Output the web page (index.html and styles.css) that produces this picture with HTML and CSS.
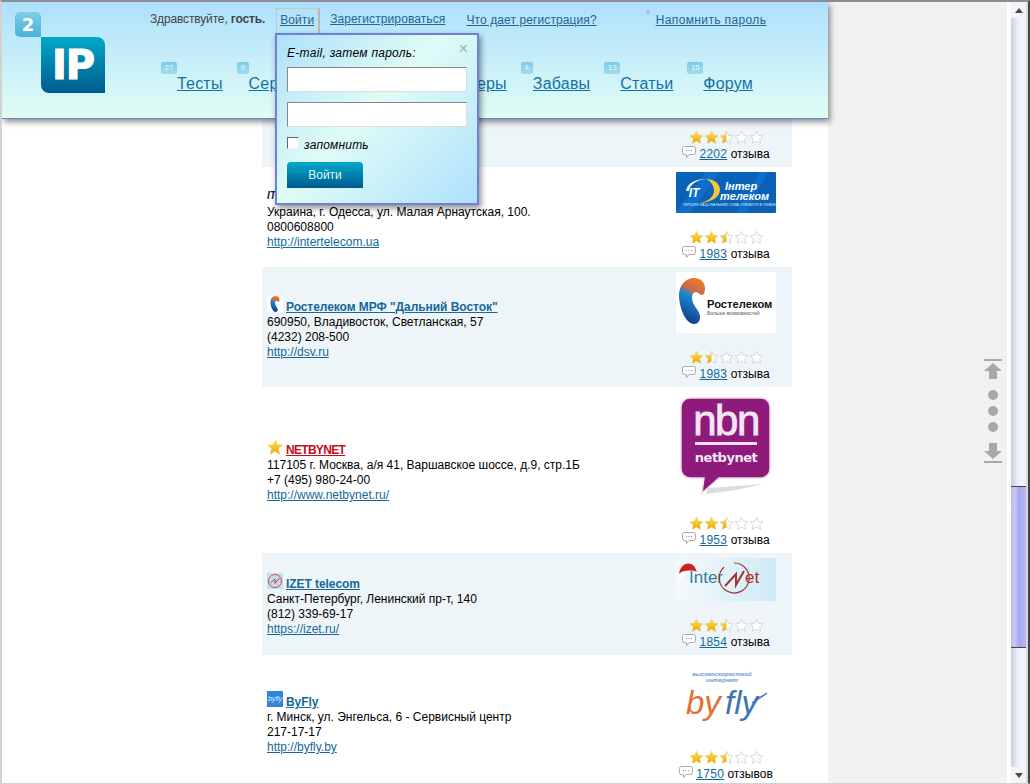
FILE: index.html
```html
<!DOCTYPE html>
<html lang="ru">
<head>
    <meta charset="UTF-8">
    <title>2IP - Провайдеры</title>
    <link rel="stylesheet" href="styles.css">
</head>
<body>
    <svg class="defs" aria-hidden="true">
        <defs>
            <linearGradient id="gold" x1="0" y1="0" x2="0" y2="1">
                <stop offset="0" stop-color="#ffe45c"/>
                <stop offset="1" stop-color="#eda600"/>
            </linearGradient>
            <linearGradient id="rtk" x1="0.7" y1="0" x2="0.4" y2="1">
                <stop offset="0" stop-color="#f47a20"/>
                <stop offset="0.3" stop-color="#c86a50"/>
                <stop offset="0.42" stop-color="#1e88d0"/>
                <stop offset="1" stop-color="#123a8c"/>
            </linearGradient>
            <symbol id="star-full" viewBox="0 0 14 14">
                <polygon points="7 .3 9.100 4.700 13.800 5.200 10.400 8.400 11.400 13.200 7 10.800 2.600 13.200 3.600 8.400 .2 5.200 4.900 4.700" fill="url(#gold)" stroke="#eeb100" stroke-width=".4"/>
            </symbol>
            <symbol id="star-half" viewBox="0 0 14 14">
                <polygon points="7 .3 9.100 4.700 13.800 5.200 10.400 8.400 11.400 13.200 7 10.800 2.600 13.200 3.600 8.400 .2 5.200 4.900 4.700" fill="#fff" stroke="#ccc" stroke-width=".8"/>
                <polygon points="7 .3 7 10.800 2.600 13.200 3.600 8.400 .2 5.200 4.900 4.700" fill="url(#gold)"/>
            </symbol>
            <symbol id="star-empty" viewBox="0 0 14 14">
                <polygon points="7 .3 9.100 4.700 13.800 5.200 10.400 8.400 11.400 13.200 7 10.800 2.600 13.200 3.600 8.400 .2 5.200 4.900 4.700" fill="#fff" stroke="#ccc" stroke-width=".8"/>
            </symbol>
            <symbol id="bubble" viewBox="0 0 14 13">
                <path d="M2.500.5h9a2 2 0 0 1 2 2v4a2 2 0 0 1-2 2H7l-2.500 3V8.500h-2a2 2 0 0 1-2-2v-4a2 2 0 0 1 2-2z" fill="#fff" stroke="#aaa"/>
                <path d="M4 4.500h1M6.500 4.500h1M9 4.500h1" stroke="#999"/>
            </symbol>
            <symbol id="rtk-mark" viewBox="0 0 26 46">
                <path d="M15 0C6 0 0 8 0 17c0 13 7 29 15 29 4 0 6-3 6-7 0-7-8-11-8-19 0-4 2-6 4-6s4 3 6 3 3-3 3-7c0-6-5-10-11-10z" fill="url(#rtk)"/>
            </symbol>
        </defs>
    </svg>

    <div class="window">
        <div class="page">
            <main class="content">
                <div class="list">
                    <article class="row tinted">
                        <div class="info"></div>
                        <div class="side-cell">
                            <div class="logo logo-first"></div>
                            <div class="stars">
                                <svg><use href="#star-full"/></svg><svg><use href="#star-full"/></svg><svg><use href="#star-half"/></svg><svg><use href="#star-empty"/></svg><svg><use href="#star-empty"/></svg>
                            </div>
                            <div class="reviews"><svg class="bubble"><use href="#bubble"/></svg><a href="#">2202</a> отзыва</div>
                        </div>
                    </article>

                    <article class="row">
                        <div class="info">
                            <div class="title">
                                <svg class="mini" viewBox="0 0 16 16"><text x="0" y="13" class="mini-it">IT</text></svg>
                                <a href="#">Интертелеком</a>
                            </div>
                            <div>Украина, г. Одесса, ул. Малая Арнаутская, 100.</div>
                            <div>0800608800</div>
                            <a href="#">http://intertelecom.ua</a>
                        </div>
                        <div class="side-cell">
                            <div class="logo">
                                <svg width="100" height="41" viewBox="0 0 100 41">
                                    <rect width="100" height="41" rx="1" fill="#0a62b8"/>
                                    <path d="M0 41 30 0h14L14 41zM60 41 84 0h8L70 41z" fill="#0d6fca"/>
                                    <path d="M10 19C11 11 20 7 30 7c-9 1-16 5-17 12z" fill="#fff"/>
                                    <path d="M30 7c9 0 14 5 14 11 0 7-8 12-20 13 9-2 14-7 14-12 0-5-3-10-8-12z" fill="#f5c53a"/>
                                    <text x="18" y="25" class="it-mark">IT</text>
                                    <text x="49" y="18" class="it-name">Інтер</text>
                                    <text x="44" y="28" class="it-name">телеком</text>
                                    <text x="7" y="34" class="it-sub">ПЕРШИЙ НАЦІОНАЛЬНИЙ CDMA ОПЕРАТОР В УКРАЇНІ</text>
                                </svg>
                            </div>
                            <div class="stars">
                                <svg><use href="#star-full"/></svg><svg><use href="#star-full"/></svg><svg><use href="#star-half"/></svg><svg><use href="#star-empty"/></svg><svg><use href="#star-empty"/></svg>
                            </div>
                            <div class="reviews"><svg class="bubble"><use href="#bubble"/></svg><a href="#">1983</a> отзыва</div>
                        </div>
                    </article>

                    <article class="row tinted">
                        <div class="info">
                            <div class="title">
                                <svg class="mini mini-white" viewBox="0 0 16 16"><use href="#rtk-mark" x="3" y="0" width="10" height="16"/></svg>
                                <a href="#">Ростелеком МРФ "Дальний Восток"</a>
                            </div>
                            <div>690950, Владивосток, Светланская, 57</div>
                            <div>(4232) 208-500</div>
                            <a href="#">http://dsv.ru</a>
                        </div>
                        <div class="side-cell">
                            <div class="logo">
                                <svg width="100" height="61" viewBox="0 0 100 61">
                                    <rect width="100" height="61" fill="#fff"/>
                                    <use href="#rtk-mark" x="3" y="6" width="26" height="46"/>
                                    <text x="31" y="36" class="rt-name">Ростелеком</text>
                                    <text x="31" y="43" class="rt-sub">Больше возможностей</text>
                                </svg>
                            </div>
                            <div class="stars">
                                <svg><use href="#star-full"/></svg><svg><use href="#star-half"/></svg><svg><use href="#star-empty"/></svg><svg><use href="#star-empty"/></svg><svg><use href="#star-empty"/></svg>
                            </div>
                            <div class="reviews"><svg class="bubble"><use href="#bubble"/></svg><a href="#">1983</a> отзыва</div>
                        </div>
                    </article>

                    <article class="row">
                        <div class="info">
                            <div class="title">
                                <svg class="mini" viewBox="0 0 16 16"><polygon points="9 0 10.500 5.500 16 5.800 11.500 9.500 13 15.500 8 12.300 3 15.500 4.500 9.500 0 5.800 5.800 5.500" fill="url(#gold)"/></svg>
                                <a href="#" class="featured">NETBYNET</a>
                            </div>
                            <div>117105 г. Москва, а/я 41, Варшавское шоссе, д.9, стр.1Б</div>
                            <div>+7 (495) 980-24-00</div>
                            <a href="#">http://www.netbynet.ru/</a>
                        </div>
                        <div class="side-cell">
                            <div class="logo logo-tall">
                                <svg width="100" height="107" viewBox="0 0 100 107">
                                    <path d="M32 96 88 92 60 98 30 102z" fill="#ddd"/>
                                    <path d="M14 6h71a9 9 0 0 1 9 9v62a9 9 0 0 1-9 9H43l-17 15 2-15H14a9 9 0 0 1-9-9V15a9 9 0 0 1 9-9z" fill="#8e1a7c" stroke="#f0d8ea" stroke-width="1.500"/>
                                    <text x="50" y="43" class="nbn-big">nbn</text>
                                    <rect x="19" y="50" width="62" height="3" fill="#f3dff0"/>
                                    <text x="50" y="70" class="nbn-small">netbynet</text>
                                </svg>
                            </div>
                            <div class="stars">
                                <svg><use href="#star-full"/></svg><svg><use href="#star-full"/></svg><svg><use href="#star-half"/></svg><svg><use href="#star-empty"/></svg><svg><use href="#star-empty"/></svg>
                            </div>
                            <div class="reviews"><svg class="bubble"><use href="#bubble"/></svg><a href="#">1953</a> отзыва</div>
                        </div>
                    </article>

                    <article class="row tinted">
                        <div class="info">
                            <div class="title">
                                <svg class="mini izet-mini" viewBox="0 0 16 16">
                                    <circle cx="8" cy="8" r="6.500" fill="none" stroke="#d44" stroke-width="1"/>
                                    <path d="M3.500 10 8 6v4.500L12.500 5" fill="none" stroke="#d33"/>
                                </svg>
                                <a href="#">IZET telecom</a>
                            </div>
                            <div>Санкт-Петербург, Ленинский пр-т, 140</div>
                            <div>(812) 339-69-17</div>
                            <a href="#">https://izet.ru/</a>
                        </div>
                        <div class="side-cell">
                            <div class="logo">
                                <svg width="100" height="43" viewBox="0 0 100 43">
                                    <defs>
                                        <linearGradient id="izbg" x1="0" y1="0" x2="1" y2="0">
                                            <stop offset="0" stop-color="#f4fafc"/>
                                            <stop offset="1" stop-color="#cfe9f6"/>
                                        </linearGradient>
                                    </defs>
                                    <rect width="100" height="43" fill="url(#izbg)"/>
                                    <path d="M3 16C4 8 10 4 15 6c3 1 5 4 6 9-5-2-11-2-18 1z" fill="#d01f1f"/>
                                    <path d="M4 15c5-3 12-3 17-1l1 4c-6-2-12-2-17 1z" fill="#fff"/>
                                    <circle cx="4" cy="18" r="2.500" fill="#fff"/>
                                    <text x="13" y="25" class="iz-inter">Inter</text>
                                    <path d="M58 5a15 15 0 1 1-10 4" fill="none" stroke="#a8322f" stroke-width="1.200"/>
                                    <path d="M49 28 60 16v11l8-14" fill="none" stroke="#a8322f" stroke-width="2"/>
                                    <text x="69" y="25" class="iz-et">et</text>
                                </svg>
                            </div>
                            <div class="stars">
                                <svg><use href="#star-full"/></svg><svg><use href="#star-full"/></svg><svg><use href="#star-half"/></svg><svg><use href="#star-empty"/></svg><svg><use href="#star-empty"/></svg>
                            </div>
                            <div class="reviews"><svg class="bubble"><use href="#bubble"/></svg><a href="#">1854</a> отзыва</div>
                        </div>
                    </article>

                    <article class="row last">
                        <div class="info">
                            <div class="title">
                                <svg class="mini byfly-mini" viewBox="0 0 16 16"><text x="8" y="10" class="by-mini">byfly</text></svg>
                                <a href="#">ByFly</a>
                            </div>
                            <div>г. Минск, ул. Энгельса, 6 - Сервисный центр</div>
                            <div>217-17-17</div>
                            <a href="#">http://byfly.by</a>
                        </div>
                        <div class="side-cell">
                            <div class="logo logo-byfly">
                                <svg width="100" height="73" viewBox="0 0 100 73">
                                    <text x="46" y="16" class="by-top">высокоскоростной</text>
                                    <text x="46" y="22" class="by-top">интернет</text>
                                    <text x="10" y="54" class="by-orange">by</text>
                                    <text x="49" y="54" class="by-blue">fly</text>
                                    <path d="M76 43 91 33" stroke="#3e74b4" stroke-width="1.500"/>
                                </svg>
                            </div>
                            <div class="stars">
                                <svg><use href="#star-full"/></svg><svg><use href="#star-full"/></svg><svg><use href="#star-half"/></svg><svg><use href="#star-empty"/></svg><svg><use href="#star-empty"/></svg>
                            </div>
                            <div class="reviews"><svg class="bubble"><use href="#bubble"/></svg><a href="#">1750</a> отзывов</div>
                        </div>
                    </article>
                </div>
            </main>

            <aside class="side">
                <div class="jump">
                    <svg width="18" height="20" viewBox="0 0 18 20"><rect width="18" height="2" fill="#a8a8a8"/><path d="M9 4l9 8h-5v8H5v-8H0z" fill="#a8a8a8"/></svg>
                    <span class="dot"></span>
                    <span class="dot"></span>
                    <span class="dot"></span>
                    <svg width="18" height="20" viewBox="0 0 18 20"><path d="M5 0h8v8h5l-9 8-9-8h5z" fill="#a8a8a8"/><rect y="18" width="18" height="2" fill="#a8a8a8"/></svg>
                </div>
            </aside>
        </div>

        <div class="scrollbar">
            <div class="scroll-btn"><span class="arrow-up"></span></div>
            <div class="track"><div class="thumb"></div></div>
            <div class="scroll-btn"><span class="arrow-down"></span></div>
        </div>

        <header class="header">
            <div class="site-logo">
                <div class="logo-two">2</div>
                <div class="logo-ip">IP</div>
            </div>
            <div class="header-main">
                <div class="top-links">
                    <span class="hello">Здравствуйте, <b>гость.</b></span>
                    <span class="login-tab"><a href="#">Войти</a></span>
                    <a href="#" class="reg">Зарегистрироваться</a>
                    <a href="#" class="why">Что дает регистрация?</a>
                    <span class="asterisk">*</span>
                    <a href="#" class="remind">Напомнить пароль</a>
                </div>
                <nav class="nav">
                    <div class="nav-item"><span class="count">27</span><a href="#">Тесты</a></div>
                    <div class="nav-item"><span class="count one">9</span><a href="#">Сервисы</a></div>
                    <div class="nav-item"><span class="count one">6</span><a href="#">Проверка</a></div>
                    <div class="nav-item"><span class="count one">7</span><a href="#">Хостеры</a></div>
                    <div class="nav-item"><span class="count one">4</span><a href="#">Забавы</a></div>
                    <div class="nav-item"><span class="count">13</span><a href="#">Статьи</a></div>
                    <div class="nav-item"><span class="count">15</span><a href="#">Форум</a></div>
                </nav>
            </div>
        </header>

        <form class="login-box">
            <span class="close">×</span>
            <label class="login-label">E-mail, затем пароль:</label>
            <input type="text" class="field">
            <input type="password" class="field">
            <label class="remember"><input type="checkbox"> запомнить</label>
            <button type="button" class="login-btn">Войти</button>
        </form>
    </div>
</body>
</html>
```

FILE: styles.css
```css
* {
    box-sizing: border-box;
}

html, body {
    margin: 0;
    height: 100%;
    overflow: hidden;
}

body {
    font-family: "Liberation Sans", Arial, sans-serif;
    font-size: 12px;
    line-height: 15px;
    color: #000;
    background: #fff;
}

a {
    color: #15689a;
}

.defs {
    position: absolute;
    width: 0;
    height: 0;
}

.window {
    position: relative;
    display: flex;
    width: 1030px;
    height: 784px;
    border-top: 2px solid #8c8c98;
    border-left: 2px solid #d4d2cc;
    border-right: 2px solid #444;
    border-bottom: 1px solid #d4d2cc;
    overflow: hidden;
}

.page {
    display: flex;
    width: 1009px;
}

/* list */
.content {
    width: 826px;
    background: #fff;
    padding-left: 260px;
}

.list {
    width: 530px;
    margin-top: -2px;
}

.row {
    display: flex;
    align-items: center;
    justify-content: space-between;
    padding: 0 16px 0 5px;
}

.tinted {
    background: #eef5f8;
}

.info {
    padding-top: 2px;
}

.last .info {
    padding-top: 8px;
}

.last .side-cell {
    padding-bottom: 1px;
}

.title {
    display: flex;
    align-items: flex-end;
    font-weight: bold;
    letter-spacing: -.06px;
}

.mini {
    width: 16px;
    height: 16px;
    margin: 0 3px 3px 0;
    flex: none;
}

.mini-white {
    background: #fff;
}

.mini-it {
    font: italic bold 10px "Liberation Sans", sans-serif;
    fill: #123;
}

.izet-mini {
    background: #bfe0f2;
}

.byfly-mini {
    background: #2f86dc;
}

.by-mini {
    font: italic 7px "Liberation Sans", sans-serif;
    fill: #dcecff;
    text-anchor: middle;
}

.title .featured {
    color: #c0101c;
    letter-spacing: -.7px;
}

.side-cell {
    width: 100px;
    padding: 5px 0;
    flex: none;
}

.logo {
    display: flex;
    justify-content: center;
    margin-bottom: 17px;
}

.logo svg {
    display: block;
}

.logo-first {
    height: 108px;
}

.logo-tall {
    height: 107px;
}

.logo-byfly {
    height: 73px;
}

.stars {
    display: flex;
    justify-content: center;
    align-items: center;
    gap: 2px;
    height: 14px;
    margin-bottom: 2px;
}

.stars svg {
    width: 13px;
    height: 13px;
}

.reviews {
    display: flex;
    justify-content: center;
    align-items: flex-start;
    height: 16px;
    line-height: 16px;
    white-space: pre;
    margin: 0 -10px;
}

.reviews a {
    letter-spacing: .3px;
}

.bubble {
    width: 14px;
    height: 13px;
    margin-right: 3px;
}

/* logo texts */
.it-mark {
    font: italic bold 12px "Liberation Sans", sans-serif;
    fill: #fff;
    text-anchor: middle;
}

.it-name {
    font: italic bold 11px "Liberation Sans", sans-serif;
    fill: #fff;
}

.it-sub {
    font: 3.500px "Liberation Sans", sans-serif;
    fill: #d8e8ff;
}

.rt-name {
    font: bold 11.200px "Liberation Sans", sans-serif;
    fill: #111;
}

.rt-sub {
    font: 5px "Liberation Sans", sans-serif;
    fill: #555;
}

.nbn-big {
    font: 42px "Liberation Sans", sans-serif;
    fill: #f6e6f3;
    stroke: #f6e6f3;
    stroke-width: .8px;
    text-anchor: middle;
    letter-spacing: -1.500px;
}

.nbn-small {
    font: bold 13px "DejaVu Sans", sans-serif;
    fill: #f6e6f3;
    text-anchor: middle;
    letter-spacing: -.5px;
}

.iz-inter {
    font: 17px "Liberation Sans", sans-serif;
    fill: #2a7f96;
}

.iz-et {
    font: 17px "Liberation Sans", sans-serif;
    fill: #a8322f;
}

.by-top {
    font: italic bold 6px "Liberation Sans", sans-serif;
    fill: #6a9ad6;
    text-anchor: middle;
}

.by-orange {
    font: italic 33px "Liberation Sans", sans-serif;
    fill: #e2702f;
}

.by-blue {
    font: italic 33px "Liberation Sans", sans-serif;
    fill: #3e74b4;
}

/* gray strip with the jump arrows */
.side {
    display: flex;
    justify-content: flex-end;
    width: 179px;
    padding: 357px 5px 0 0;
    background: #f2f1ef;
    margin-right: 4px;
}

.jump {
    display: flex;
    flex-direction: column;
    align-items: center;
    width: 18px;
}

.jump svg {
    display: block;
    flex: none;
}

.dot {
    width: 10px;
    height: 10px;
    margin-bottom: 6px;
    border-radius: 50%;
    background: #a8a8a8;
}

.jump svg:first-child {
    margin-bottom: 11px;
}

.jump .dot:nth-child(4) {
    margin-bottom: 11px;
}

/* scrollbar */
.scrollbar {
    display: flex;
    flex-direction: column;
    width: 17px;
    border-right: 2px solid #d8d8d8;
}

.scroll-btn {
    display: flex;
    align-items: center;
    justify-content: center;
    height: 16px;
    background: #f4f4f8;
}

.arrow-up, .arrow-down {
    width: 0;
    height: 0;
    border-left: 4px solid transparent;
    border-right: 4px solid transparent;
}

.arrow-up {
    border-bottom: 5px solid #4a4a4a;
}

.arrow-down {
    border-top: 5px solid #4a4a4a;
}

.track {
    flex: 1;
    padding-top: 468px;
    background: linear-gradient(90deg, #ccd0da, #eef1fb 50%, #f4f6fe);
}

.thumb {
    height: 162px;
    border-top: 1px solid #444;
    border-bottom: 1px solid #444;
    background: linear-gradient(90deg, #bcbef0, #c6c8f2 25%, #a4a6f2 55%, #b8baf2);
}

/* header overlay */
.header {
    position: absolute;
    top: 0;
    left: 0;
    display: flex;
    width: 826px;
    height: 117px;
    border-bottom: 1px solid #6f80d6;
    background: linear-gradient(#aee0fd, #e0fdf5);
    box-shadow: 2px 3px 6px rgba(0, 0, 0, .45);
}

.site-logo {
    width: 148px;
    padding: 10px 0 0 13px;
    flex: none;
}

.logo-two {
    width: 26px;
    height: 25px;
    border-radius: 5px 5px 0 5px;
    background: linear-gradient(#80cde8, #48b2d8);
    color: #fff;
    font: bold 18px/25px "DejaVu Sans", sans-serif;
    text-align: center;
}

.logo-ip {
    width: 64px;
    height: 56px;
    margin-left: 26px;
    border-radius: 0 8px 0 8px;
    background: linear-gradient(#00a9c9, #005a8e);
    color: #fff;
    font: bold 40px/56px "DejaVu Sans", sans-serif;
    -webkit-text-stroke: 1px #fff;
    letter-spacing: -1px;
    text-align: center;
}

.header-main {
    flex: 1;
}

.top-links {
    display: flex;
    align-items: flex-start;
    height: 32px;
    padding-top: 6px;
    letter-spacing: .1px;
}

.top-links a {
    color: #27648e;
    margin-top: 4px;
}

.top-links .why, .top-links .remind {
    margin-top: 5px;
}

.hello {
    color: #444;
    letter-spacing: -.15px;
    margin-top: 4px;
}

.login-tab {
    width: 44px;
    height: 30px;
    margin: 0 10px 0 11px;
    padding: 4px 0 0 3px;
    border-top: 1px solid #c6c6c6;
    border-left: 1px solid #c6c6c6;
    border-right: 2px solid #b8b8b8;
}

.reg {
    margin-right: 21px;
}

.why {
    margin-right: 49px;
}

.asterisk {
    width: 10px;
    color: #aaa;
}

.top-links .remind {
    letter-spacing: .37px;
}

.nav {
    display: flex;
    gap: 14px;
    margin-top: 28px;
    padding-left: 11px;
    font-size: 16px;
    line-height: 18px;
    letter-spacing: .2px;
}

.nav-item {
    display: flex;
    align-items: flex-start;
}

.nav-item a {
    margin-top: 13px;
    color: #1272a8;
}

.count {
    width: 16px;
    height: 12px;
    border-radius: 2px;
    background: linear-gradient(#7ccbe6, #a2dcef);
    color: #e8f8fc;
    font-size: 8px;
    line-height: 12px;
    letter-spacing: 0;
    text-align: center;
}

.count.one {
    width: 12px;
}

/* login popup */
.login-box {
    position: absolute;
    top: 31px;
    left: 273px;
    display: flex;
    flex-direction: column;
    align-items: flex-start;
    width: 204px;
    height: 172px;
    padding: 11px 10px 0;
    border: 2px solid #6f80d6;
    background: linear-gradient(135deg, #aee0fd 0%, #dffcf6 45%, #aee0fd 100%);
    box-shadow: 2px 3px 6px rgba(0, 0, 0, .45);
}

.close {
    position: absolute;
    top: 6px;
    right: 9px;
    color: #aaa;
    font-size: 16px;
}

.login-label {
    font-style: italic;
    letter-spacing: .25px;
    margin-bottom: 6px;
}

.field {
    width: 180px;
    height: 25px;
    margin: 0 0 10px;
    border: 1px solid #ddd;
    border-top-color: #888;
    border-left-color: #888;
    background: #fff;
}

.remember {
    display: flex;
    align-items: flex-start;
    gap: 5px;
    height: 17px;
    line-height: 17px;
    margin-bottom: 8px;
    font-style: italic;
    letter-spacing: .2px;
}

.remember input {
    appearance: none;
    width: 12px;
    height: 12px;
    margin: 0;
    border: 1px solid #eee;
    border-top-color: #666;
    border-left-color: #666;
    background: #fff;
}

.login-btn {
    width: 76px;
    height: 26px;
    padding: 0;
    border: 0;
    border-radius: 4px 4px 0 0;
    background: linear-gradient(#00a9c9, #005a8e);
    color: #dff;
    font: 12px "Liberation Sans", sans-serif;
}
```
